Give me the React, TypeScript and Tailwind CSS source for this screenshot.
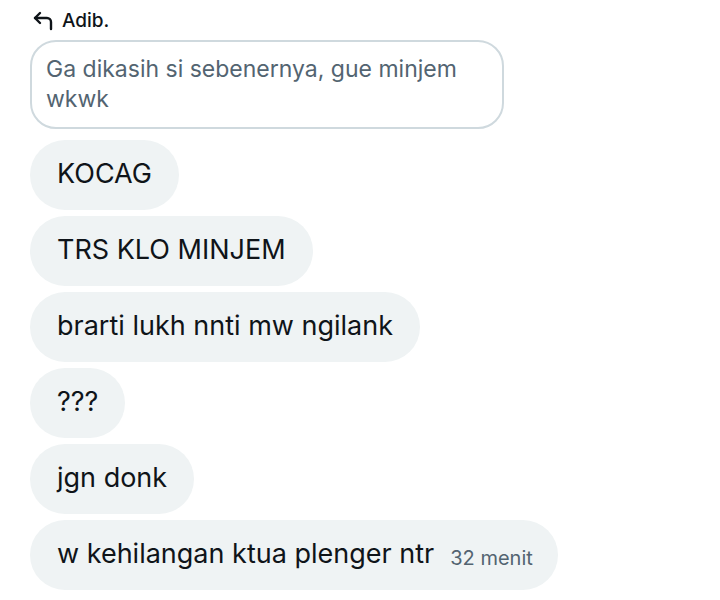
import React from "react";

function Bubble({ children }: { children: React.ReactNode }) {
  return (
    <div className="flex h-[70px] items-center self-start rounded-[35px] bg-[#eff3f4] px-[27px] text-[27px] text-[#0f1419]">
      {children}
    </div>
  );
}

export default function App() {
  return (
    <div className="h-[600px] w-[720px] overflow-hidden bg-white font-['Inter','Noto_Sans',sans-serif]">
      <div className="flex flex-col pl-[30px] pt-[7px]">
        <div className="flex items-center gap-[7px] pl-[1px] text-[19px] font-medium text-[#0f1419]">
          <svg width="24" height="24" viewBox="0 0 24 24" fill="none" stroke="#0f1419" strokeWidth="2.4" strokeLinecap="round" strokeLinejoin="round">
            <polyline points="9 14 4 9 9 4" />
            <path d="M20 20v-7a4 4 0 0 0-4-4H4" />
          </svg>
          <span>Adib.</span>
        </div>
        <div className="mt-[4px] w-[474px] rounded-[26px] border-2 border-[#cfd9de] px-[14px] pb-[13px] pt-[12px] text-[23px] leading-[30px] text-[#536471]">
          Ga dikasih si sebenernya, gue minjem wkwk
        </div>
        <div className="mt-[11px] flex flex-col gap-[6px]">
          <Bubble>KOCAG</Bubble>
          <Bubble>TRS KLO MINJEM</Bubble>
          <Bubble>brarti lukh nnti mw ngilank</Bubble>
          <Bubble>???</Bubble>
          <Bubble>jgn donk</Bubble>
          <div className="flex h-[70px] items-center self-start rounded-[35px] bg-[#eff3f4] pl-[27px] pr-[25px] text-[#0f1419]">
            <span className="text-[27px]">w kehilangan ktua plenger ntr</span>
            <span className="ml-[16px] mt-[6px] text-[20px] text-[#536471]">32 menit</span>
          </div>
        </div>
      </div>
    </div>
  );
}
